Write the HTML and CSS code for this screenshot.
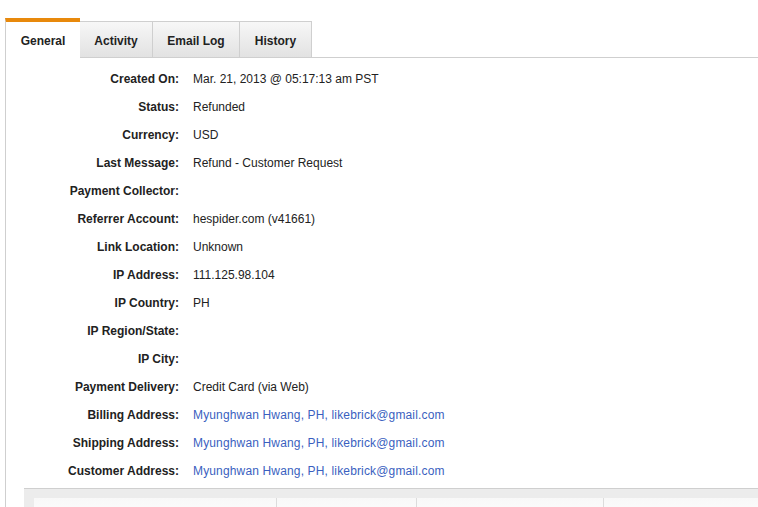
FILE: index.html
```html
<!DOCTYPE html>
<html>
<head>
<meta charset="utf-8">
<link rel="stylesheet" href="styles.css">
</head>
<body>
<div class="page">
  <div class="tabs">
    <div class="tab active">General</div>
    <div class="tab t-activity">Activity</div>
    <div class="tab t-email">Email Log</div>
    <div class="tab t-history">History</div>
    <div class="tab-fill"></div>
  </div>
  <div class="panel">
    <div class="details">
      <div class="label">Created On:</div><div class="value">Mar. 21, 2013 @ 05:17:13 am PST</div>
      <div class="label">Status:</div><div class="value">Refunded</div>
      <div class="label">Currency:</div><div class="value">USD</div>
      <div class="label">Last Message:</div><div class="value">Refund - Customer Request</div>
      <div class="label">Payment Collector:</div><div class="value"></div>
      <div class="label">Referrer Account:</div><div class="value">hespider.com (v41661)</div>
      <div class="label">Link Location:</div><div class="value">Unknown</div>
      <div class="label">IP Address:</div><div class="value">111.125.98.104</div>
      <div class="label">IP Country:</div><div class="value">PH</div>
      <div class="label">IP Region/State:</div><div class="value"></div>
      <div class="label">IP City:</div><div class="value"></div>
      <div class="label">Payment Delivery:</div><div class="value">Credit Card (via Web)</div>
      <div class="label">Billing Address:</div><div class="value"><a class="link" href="#">Myunghwan Hwang, PH, likebrick@gmail.com</a></div>
      <div class="label">Shipping Address:</div><div class="value"><a class="link" href="#">Myunghwan Hwang, PH, likebrick@gmail.com</a></div>
      <div class="label">Customer Address:</div><div class="value"><a class="link" href="#">Myunghwan Hwang, PH, likebrick@gmail.com</a></div>
    </div>
    <div class="table-box">
      <div class="table-head">
        <div class="col c1"></div>
        <div class="col c2"></div>
        <div class="col c3"></div>
        <div class="col c4"></div>
      </div>
    </div>
  </div>
</div>
</body>
</html>
```
FILE: styles.css
```css
html, body {
  margin: 0;
  padding: 0;
  background: #fff;
}
body {
  font-family: Arial, "Liberation Sans", sans-serif;
  font-size: 12px;
  color: #222;
  overflow: hidden;
  height: 507px;
}
.page {
  padding-top: 18px;
  padding-left: 5px;
}
.tabs {
  display: flex;
  align-items: flex-end;
  height: 40px;
}
.tab {
  box-sizing: border-box;
  height: 37px;
  padding-top: 2px;
  font-weight: bold;
  display: flex;
  align-items: center;
  justify-content: center;
  border: 1px solid #cfcfcf;
  border-left: none;
  background: linear-gradient(#f7f7f7, #e2e2e2);
  color: #222;
}
.tab.active {
  height: 41px;
  margin-bottom: -1px;
  border: none;
  border-left: 1px solid #cfcfcf;
  border-top: 4px solid #e8890c;
  background: #fff;
  width: 75px;
  padding-top: 1px;
}
.t-activity { width: 73px; }
.t-email { width: 87px; }
.t-history { width: 72px; }
.tab-fill {
  flex: 1;
  border-bottom: 1px solid #cfcfcf;
}
.panel {
  border-left: 1px solid #cfcfcf;
  padding-top: 7px;
  height: 460px;
}
.details {
  display: grid;
  grid-template-columns: 173px 1fr;
  column-gap: 14px;
  grid-auto-rows: 28px;
  align-items: center;
}
.label {
  text-align: right;
  font-weight: bold;
}
.value {
  color: #222;
}
.link {
  color: #3a5fc0;
  text-decoration: none;
  letter-spacing: 0.15px;
}
.table-box {
  margin-top: 3px;
  margin-left: 18px;
  border-top: 1px solid #cfcfcf;
  background: #ececec;
  padding: 9px 0 0 10px;
  height: 30px;
}
.table-head {
  display: flex;
  background: linear-gradient(#f8f8f8, #fff);
  height: 30px;
}
.col {
  box-sizing: border-box;
  border-right: 1px solid #dcdcdc;
}
.c1 { width: 243px; }
.c2 { width: 140px; }
.c3 { width: 187px; }
.c4 { flex: 1; border-right: none; }
```
